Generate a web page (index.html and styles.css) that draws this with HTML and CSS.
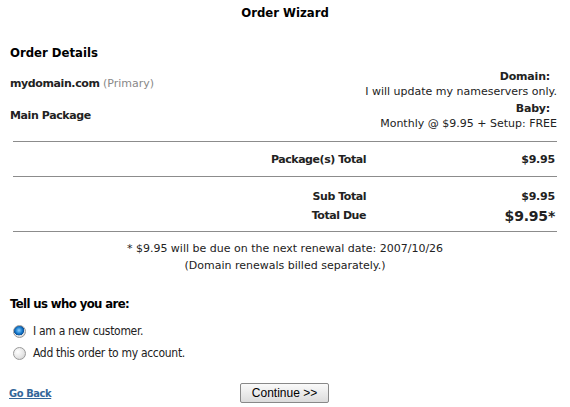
FILE: index.html
```html
<!DOCTYPE html>
<html>
<head>
<meta charset="utf-8">
<link rel="stylesheet" href="styles.css">
</head>
<body>
<div class="page">
  <h1 class="title">Order Wizard</h1>
  <h2 class="section">Order Details</h2>
  <div class="items">
    <div class="item">
      <div class="item-name">mydomain.com <span class="muted">(Primary)</span></div>
      <div class="item-info">
        <div class="info-label">Domain:</div>
        <div class="info-value">I will update my nameservers only.</div>
      </div>
    </div>
    <div class="item">
      <div class="item-name">Main Package</div>
      <div class="item-info">
        <div class="info-label">Baby:</div>
        <div class="info-value">Monthly @ $9.95 + Setup: FREE</div>
      </div>
    </div>
  </div>
  <div class="totals">
    <div class="tot-row first">
      <div class="tot-label">Package(s) Total</div>
      <div class="tot-amount">$9.95</div>
    </div>
    <div class="tot-group">
      <div class="tot-row">
        <div class="tot-label">Sub Total</div>
        <div class="tot-amount">$9.95</div>
      </div>
      <div class="tot-row">
        <div class="tot-label">Total Due</div>
        <div class="tot-amount big">$9.95*</div>
      </div>
    </div>
  </div>
  <div class="note">
    <div>* $9.95 will be due on the next renewal date: 2007/10/26</div>
    <div>(Domain renewals billed separately.)</div>
  </div>
  <h2 class="section who">Tell us who you are:</h2>
  <div class="choices">
    <label class="choice"><input type="radio" name="cust" checked> I am a new customer.</label>
    <label class="choice"><input type="radio" name="cust"> Add this order to my account.</label>
  </div>
  <div class="footer">
    <a class="back" href="#">Go Back</a>
    <button class="continue" type="button">Continue &gt;&gt;</button>
  </div>
</div>
</body>
</html>
```

FILE: styles.css
```css
html, body {
  margin: 0;
  padding: 0;
  background: #fff;
}
body {
  font-family: "DejaVu Sans", Verdana, sans-serif;
  font-size: 11px;
  color: #222;
}
.page {
  width: 570px;
  padding: 0 0 0 10px;
  box-sizing: border-box;
}
.title {
  margin: 0;
  padding: 5px 10px 0 0;
  height: 40px;
  text-align: center;
  font-family: "DejaVu Sans Condensed", "DejaVu Sans", sans-serif;
  font-weight: bold;
  font-size: 13px;
  color: #000;
}
.section {
  margin: 0;
  font-family: "DejaVu Sans Condensed", "DejaVu Sans", sans-serif;
  font-weight: bold;
  font-size: 13px;
  color: #000;
  height: 22px;
}
.items {
  padding-right: 13px;
}
.item {
  display: flex;
  align-items: center;
  justify-content: space-between;
  height: 32px;
}
.item-name {
  font-weight: bold;
  letter-spacing: -0.4px;
}
.muted {
  color: #888;
  font-weight: normal;
  letter-spacing: 0;
}
.item-info {
  text-align: right;
  line-height: 15px;
  padding-top: 2px;
}
.info-label {
  font-weight: bold;
  padding-right: 7px;
  letter-spacing: -0.2px;
}
.totals {
  margin: 10px 13px 0 3px;
  border-top: 1px solid #8c8c8c;
  border-bottom: 1px solid #8c8c8c;
}
.tot-row {
  display: flex;
  align-items: center;
  height: 19px;
  font-weight: bold;
}
.tot-row.first {
  height: 33px;
  padding-top: 1px;
  border-bottom: 1px solid #8c8c8c;
}
.tot-group {
  padding: 10px 0 6px;
}
.tot-label {
  width: 353px;
  text-align: right;
  letter-spacing: -0.45px;
}
.tot-amount {
  flex: 1;
  text-align: right;
  padding-right: 2px;
  letter-spacing: -0.2px;
}
.tot-amount.big {
  font-size: 14px;
}
.note {
  text-align: center;
  line-height: 17px;
  padding: 8px 10px 0 0;
  height: 56px;
}
.who {
  height: 24px;
  letter-spacing: -0.6px;
}
.choices {
  display: flex;
  flex-direction: column;
  font-family: "DejaVu Sans Condensed", "DejaVu Sans", sans-serif;
  font-size: 12px;
  letter-spacing: -0.3px;
  color: #222;
}
.choice {
  display: flex;
  align-items: center;
  height: 22px;
}
.choice input {
  appearance: none;
  -webkit-appearance: none;
  margin: 0 7px 0 3px;
  width: 13px;
  height: 13px;
  border-radius: 50%;
  border: 1px solid #9a9a9a;
  box-sizing: border-box;
  background: radial-gradient(circle at 35% 35%, #ffffff 0%, #e6e6e6 55%, #c8c8c8 100%);
}
.choice input:checked {
  background:
    radial-gradient(circle at 45% 40%, #8fd0ff 0%, #1b7fd0 35%, #0a4f98 55%, transparent 58%),
    radial-gradient(circle at 35% 35%, #ffffff 0%, #e6e6e6 55%, #c8c8c8 100%);
}
.footer {
  display: flex;
  align-items: center;
  margin-top: 16px;
  height: 26px;
}
.back {
  font-family: "DejaVu Sans Condensed", "DejaVu Sans", sans-serif;
  font-weight: bold;
  letter-spacing: -0.4px;
  color: #336699;
  margin-left: -1px;
  width: 231px;
}
.continue {
  font-family: "Liberation Sans", Arial, sans-serif;
  font-size: 12px;
  width: 89px;
  height: 20px;
  padding: 0;
  border: 1px solid #888;
  border-radius: 2px;
  background: linear-gradient(#fafafa, #dcdcdc);
  color: #000;
}
```
